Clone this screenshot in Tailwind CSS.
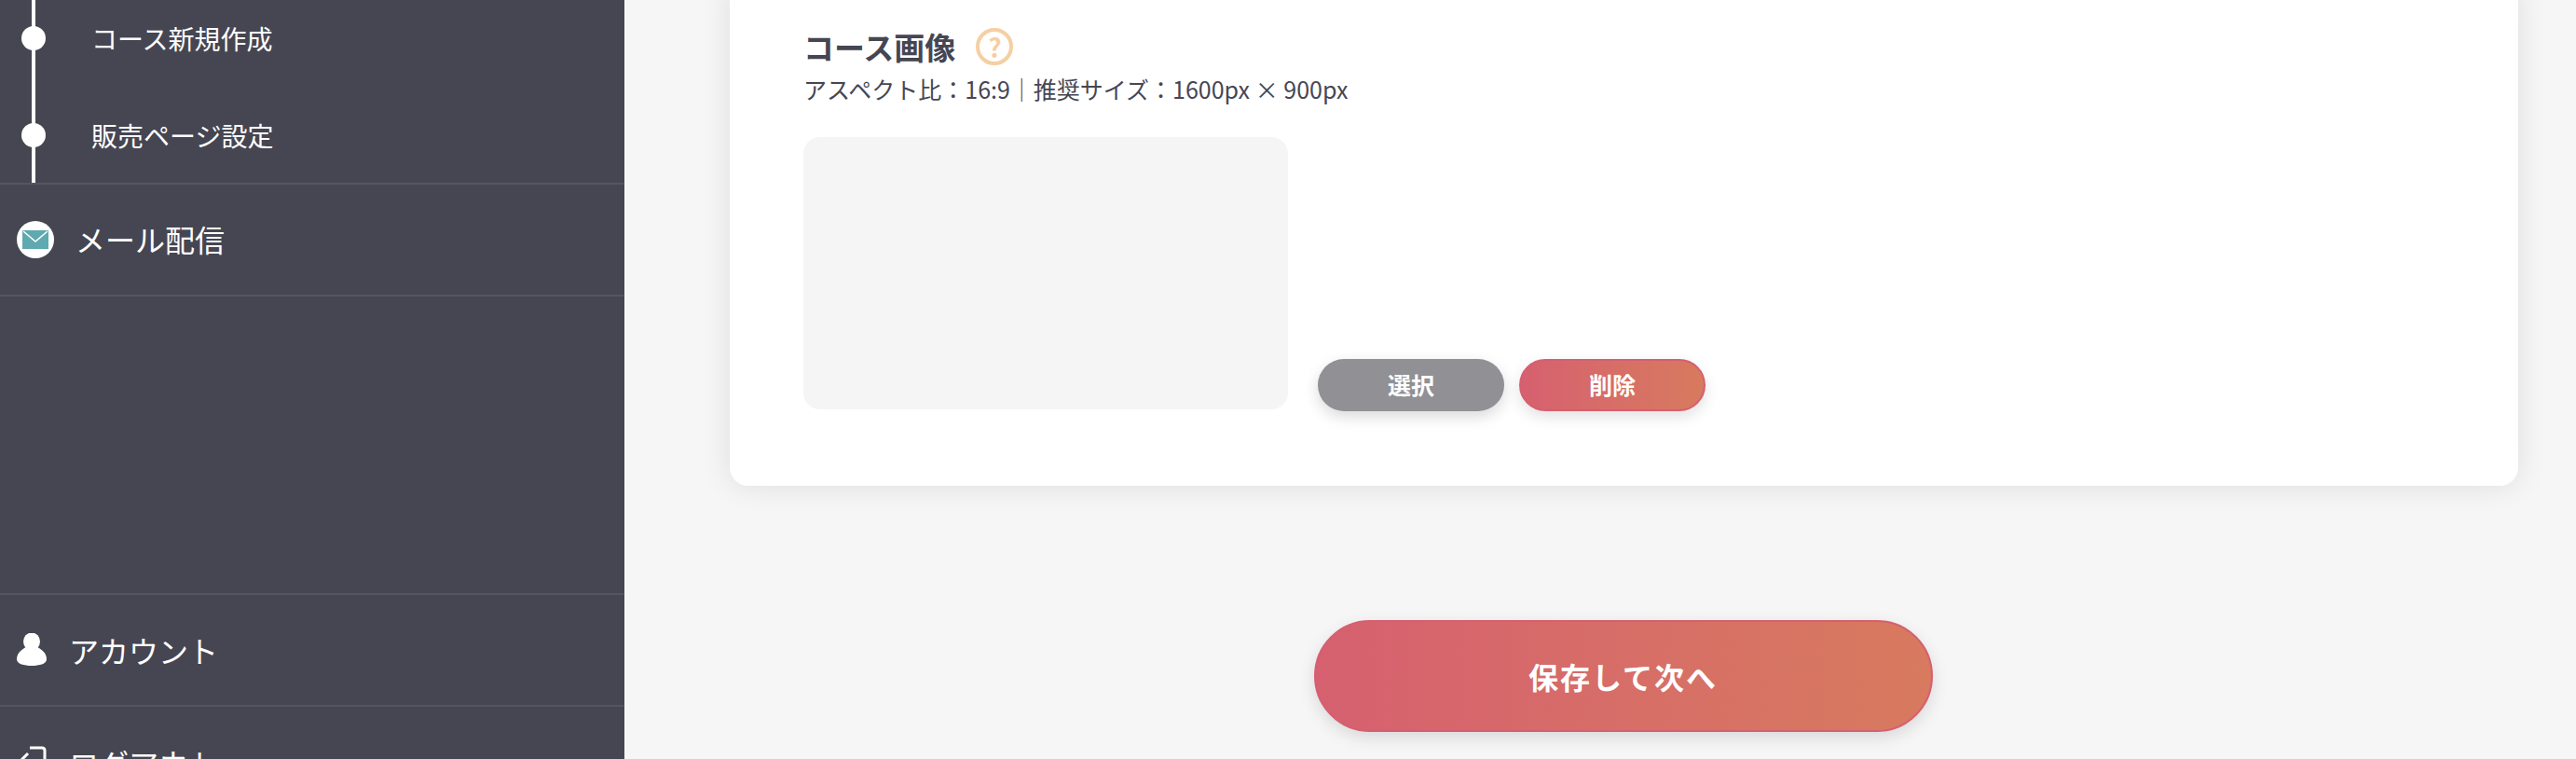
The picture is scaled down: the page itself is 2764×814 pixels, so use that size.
<!DOCTYPE html>
<html lang="ja">
<head>
  <meta charset="UTF-8" />
  <title>コース画像</title>
  <script src="https://cdn.jsdelivr.net/npm/@tailwindcss/browser@4"></script>
</head>
<body class="h-[814px] overflow-hidden bg-[#f6f6f6] font-['Noto_Sans_CJK_JP','Noto_Sans',sans-serif]">
  <div class="flex h-[814px] overflow-hidden">

    <!-- sidebar -->
    <aside class="w-[670px] h-[814px] shrink-0 flex flex-col bg-[#464652] text-white overflow-hidden">
      <ul class="relative h-[196px] shrink-0">
        <span class="absolute left-[34px] top-0 bottom-0 w-[4px] bg-white"></span>
        <li class="relative h-[104px] -mt-[11px] flex items-center text-[28px]">
          <span class="w-[26px] h-[26px] ml-[23px] rounded-full bg-white"></span>
          <span class="ml-[49px]">コース新規作成</span>
        </li>
        <li class="relative h-[104px] flex items-center text-[28px]">
          <span class="w-[26px] h-[26px] ml-[23px] rounded-full bg-white"></span>
          <span class="ml-[49px]">販売ページ設定</span>
        </li>
      </ul>
      <a class="h-[122px] shrink-0 flex items-center border-y-2 border-[#55555f] text-[32px] leading-[40px]">
        <svg class="ml-[18px] w-[40px] h-[40px]" viewBox="0 0 40 40">
          <circle cx="20" cy="20" r="20" fill="#fff" />
          <rect x="6" y="10" width="28" height="20" fill="#5fa9b0" />
          <path d="M7 11 L20 22 L33 11" fill="none" stroke="#fff" stroke-width="1.5" />
        </svg>
        <span class="ml-[23px] -mt-[2px]">メール配信</span>
      </a>
      <div class="h-[318px] shrink-0"></div>
      <a class="h-[122px] shrink-0 flex items-center border-y-2 border-[#55555f] text-[32px]">
        <svg class="ml-[18px] w-[32px] h-[36px]" viewBox="0 0 32 36">
          <ellipse cx="16" cy="9" rx="9" ry="9.5" fill="#fff" />
          <path d="M0 28 C0 21 6 17 10 15 C12 19 20 19 22 15 C26 17 32 21 32 28 C32 33 24 35 16 35 C8 35 0 33 0 28Z" fill="#fff" />
        </svg>
        <span class="ml-[24px]">アカウント</span>
      </a>
      <a class="h-[120px] shrink-0 flex items-center text-[32px]">
        <svg class="ml-[18px] w-[32px] h-[36px]" viewBox="0 0 32 36">
          <path d="M14 2 H27 Q30 2 30 5 V31 Q30 34 27 34 H14 M2 18 L12 8 M2 18 L12 28 M2 18 H22" fill="none" stroke="#fff" stroke-width="3" />
        </svg>
        <span class="ml-[24px]">ログアウト</span>
      </a>
    </aside>

    <!-- main -->
    <main class="flex-1 flex flex-col text-[#464652]">
      <section class="h-[541px] shrink-0 -mt-[20px] ml-[113px] mr-[62px] pl-[79px] pt-[50px] bg-white rounded-[20px] shadow-[0_0_32px_rgba(0,0,0,0.1)]">
        <h2 class="flex items-center gap-[22px] text-[33px] leading-[40px] font-bold">
          コース画像
          <span class="w-[40px] h-[40px] flex items-center justify-center rounded-full border-[4px] border-[#f5cfa3] text-[28px] leading-none text-[#f5cfa3]">?</span>
        </h2>
        <p class="mt-[5px] text-[25px] leading-[40px]">アスペクト比：16:9｜推奨サイズ：1600px × 900px</p>
        <div class="mt-[32px] flex items-end gap-[32px]">
          <div class="w-[520px] h-[292px] rounded-[18px] bg-[#f5f5f5]"></div>
          <div class="flex gap-[16px] -mb-[2px]">
            <button class="w-[200px] h-[56px] rounded-full bg-[#909095] text-white text-[25px] font-bold shadow-[0_6px_16px_rgba(0,0,0,0.15)]">選択</button>
            <button class="w-[200px] h-[56px] rounded-full border-2 border-[#d55f70] bg-gradient-to-r from-[#d6606f] to-[#d77a5e] text-white text-[25px] font-bold shadow-[0_6px_16px_rgba(0,0,0,0.12)]">削除</button>
          </div>
        </div>
      </section>
      <div class="mt-[144px] ml-[111px] mr-[62px] flex justify-center">
        <button class="w-[664px] h-[120px] shrink-0 rounded-full border-2 border-[#d55f70] bg-gradient-to-r from-[#d6606f] to-[#d77a5e] text-white text-[32px] font-bold tracking-[2px] shadow-[0_6px_18px_rgba(0,0,0,0.12)]">保存して次へ</button>
      </div>
    </main>
  </div>
</body>
</html>
